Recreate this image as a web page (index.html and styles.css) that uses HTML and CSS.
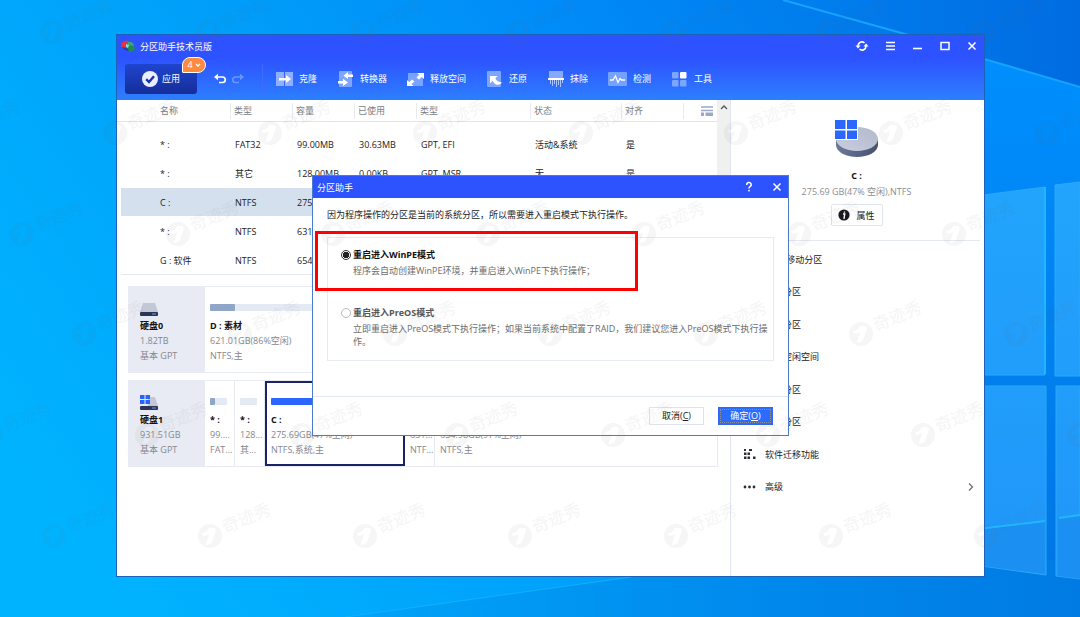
FILE: index.html
```html
<!DOCTYPE html>
<html lang="zh-CN">
<head>
<meta charset="utf-8">
<title>分区助手技术员版</title>
<link rel="stylesheet" href="styles.css">
</head>
<body>
<div class="desktop">
  <svg class="wallpaper" viewBox="0 0 1080 617" preserveAspectRatio="none" aria-hidden="true">
    <defs>
      <linearGradient id="sky" x1="0" y1="0.7" x2="1" y2="0.3">
        <stop offset="0" stop-color="#00b3ff"/><stop offset="0.35" stop-color="#00a2fa"/>
        <stop offset="0.7" stop-color="#008af8"/><stop offset="1" stop-color="#0074e6"/>
      </linearGradient>
      <linearGradient id="corner" x1="0" y1="0" x2="1" y2="0">
        <stop offset="0" stop-color="#0080f0"/><stop offset="1" stop-color="#006ce2"/>
      </linearGradient>
      <linearGradient id="floor" x1="0" y1="0" x2="1" y2="0">
        <stop offset="0" stop-color="#00a4f8"/><stop offset="0.6" stop-color="#0088ec"/><stop offset="1" stop-color="#007be4"/>
      </linearGradient>
      <linearGradient id="beam" x1="0" y1="0" x2="0" y2="1">
        <stop offset="0" stop-color="#0090ff"/><stop offset="1" stop-color="#0074e2"/>
      </linearGradient>
      <linearGradient id="pane" x1="0" y1="0" x2="0" y2="1">
        <stop offset="0" stop-color="#22a4fc"/><stop offset="1" stop-color="#2096fa"/>
      </linearGradient>
    </defs>
    <rect width="1080" height="617" fill="url(#sky)"/>
    <path d="M783 0H1080V87L984 59L905 34Z" fill="url(#corner)"/>
    <path d="M905 34L984 59L1080 87V617H905Z" fill="url(#beam)"/>
    <path d="M345 617L631 577L984 560H1080V617Z" fill="url(#floor)"/>
    <path d="M783 0L905 34L984 59L1080 87" fill="none" stroke="#16a2ff" stroke-width="2"/>
    <path d="M345 617L631 577" fill="none" stroke="#10b0ff" stroke-width="1"/>
    <path d="M960 198L1045 187V375H960ZM1055 185L1080 182V376H1055ZM960 386H1046V575L960 563ZM1056 386H1080V579L1056 576Z" fill="url(#pane)" stroke="#2aa9fa"/>
    <path d="M960 531L1045 521V574L960 563ZM1058 518L1080 515V579L1058 576Z" fill="#1c90f2"/>
    <path d="M960 531L1045 521M1059 518L1080 515M1045 187V374" fill="none" stroke="#1fb8ff" stroke-width="2"/>
  </svg>

  <main class="window">
    <header class="top">
      <div class="titlebar">
        <svg class="logo" viewBox="0 0 14 12" aria-hidden="true">
          <path d="M0 6C0 1 4 0 8 1L6 5L5 8Q2 9 0 6Z" fill="#e5333a"/>
          <path d="M7 2Q11 1 13 5L12 7L7 6Z" fill="#3aa66a"/>
          <path d="M6 6Q14 4 14 9Q12 12 9 12Q6 11 6 6Z" fill="#238b52"/>
          <path d="M1 7L6 8L8 11Q3 11 1 7Z" fill="#2a3fae"/>
          <path d="M5 4L8 5L7 8L5 7Z" fill="#8ed5f5"/>
        </svg>
        <h1 class="title">分区助手技术员版</h1>
        <div class="controls">
          <button class="ctl" aria-label="刷新"><svg viewBox="0 0 14 14"><path d="M3 7A4 4 0 0 1 9.500 3.800M11 7A4 4 0 0 1 4.500 10.200" fill="none" stroke="#fff" stroke-width="1.600"/><path d="M0.500 6.500H5.500L3 9.500ZM8.500 7.500H13.500L11 4.500Z" fill="#fff"/></svg></button>
          <button class="ctl" aria-label="菜单"><svg viewBox="0 0 14 14"><path d="M3 3.500H12M3 7H12M3 10.500H12" stroke="#fff" stroke-width="1.300"/></svg></button>
          <button class="ctl" aria-label="最小化"><svg viewBox="0 0 14 14"><path d="M3 9.500H12" stroke="#fff" stroke-width="1.600"/></svg></button>
          <button class="ctl" aria-label="最大化"><svg viewBox="0 0 14 14"><rect x="3" y="3.500" width="8" height="7" fill="none" stroke="#fff" stroke-width="1.500"/></svg></button>
          <button class="ctl" aria-label="关闭"><svg viewBox="0 0 14 14"><path d="M3.500 3.500L10.500 10.500M10.500 3.500L3.500 10.500" stroke="#fff" stroke-width="1.500"/></svg></button>
        </div>
      </div>
      <nav class="toolbar">
        <div class="apply-wrap">
          <button class="apply">
            <svg class="check" viewBox="0 0 16 16" aria-hidden="true"><circle cx="8" cy="8" r="8" fill="#e9efff"/><path d="M4.200 8.200L7 11L12 5.200" fill="none" stroke="#1a34a8" stroke-width="2.400"/></svg>
            <span>应用</span>
          </button>
          <button class="badge"><span>4</span><svg viewBox="0 0 6 6" aria-hidden="true"><path d="M1 2L3 4L5 2" fill="none" stroke="#fff" stroke-width="1.300"/></svg></button>
        </div>
        <div class="history">
          <button class="ctl" aria-label="撤销"><svg viewBox="0 0 14 14"><path d="M4 5H9.500A2.500 2.500 0 0 1 9.500 10.500H6" fill="none" stroke="#fff" stroke-width="1.700"/><path d="M1 5L5 1.800V8.200Z" fill="#fff"/></svg></button>
          <button class="ctl faded" aria-label="重做"><svg viewBox="0 0 14 14"><path d="M10 5H4.500A2.500 2.500 0 0 0 4.500 10.500H8" fill="none" stroke="#fff" stroke-width="1.500"/><path d="M13 5L9 1.800V8.200Z" fill="#fff"/></svg></button>
        </div>
        <div class="tools">
          <button class="tool"><svg viewBox="0 0 18 16"><path d="M0 1H8V15H0ZM9 1H17V15H9Z" fill="#8fb0ff"/><path d="M3 7H10V4L15 8L10 12V9.500H3Z" fill="#fff"/></svg><span>克隆</span></button>
          <button class="tool"><svg viewBox="0 0 18 16"><rect x="2" width="13" height="16" rx="1" fill="#7ea6ff"/><path d="M16 3.500H11V1L6.500 4.800L11 8V6H16ZM1 10H6V7.800L11 11.500L6 15V12.500H1Z" fill="#fff"/></svg><span>转换器</span></button>
          <button class="tool"><svg viewBox="0 0 18 16"><rect x="1" y="2" width="15" height="13" fill="#78a3ff"/><path d="M10 2H17V8L14.800 6L12 8.500L9.500 6.500L12.200 3.800ZM0 9L2.200 11L5 8.500L7.500 10.500L4.500 13L6.500 15H0Z" fill="#fff"/></svg><span>释放空间</span></button>
          <button class="tool"><svg viewBox="0 0 18 16"><rect x="1" width="14" height="16" rx="1" fill="#7ba5ff"/><path d="M4 5H11.500L9.300 7.300Q11 11 16 11.500Q14 14.500 10 13.500Q7.500 12.500 6.600 9.800L4 12.500Z" fill="#fff"/></svg><span>还原</span></button>
          <button class="tool"><svg viewBox="0 0 18 16"><path d="M2 0H16V7H2Z" fill="#85aaff"/><path d="M1 7H17V9H1Z" fill="#fff"/><path d="M3.500 9V13M5.500 9V15M7.500 9V13M9.500 9V16M11.500 9V14M13.500 9V16M15.500 9V12" stroke="#a9c5ff" stroke-width="1"/></svg><span>抹除</span></button>
          <button class="tool wide"><svg viewBox="0 0 20 16"><rect x="0" y="1" width="19" height="14" rx="1" fill="#75a1ff"/><path d="M2 9H5L7.500 5L10 11.500L12 7.500L13.500 9H17" fill="none" stroke="#fff" stroke-width="1.300"/></svg><span>检测</span></button>
          <button class="tool"><svg viewBox="0 0 18 16"><rect x="1" y="1" width="6.500" height="6.500" rx="1" fill="#7da6ff"/><rect x="9" y="1" width="6.500" height="6.500" rx="1" fill="#fff"/><rect x="1" y="9" width="6.500" height="6.500" rx="1" fill="#7da6ff"/><rect x="9" y="9" width="6.500" height="6.500" rx="1" fill="#7da6ff"/></svg><span>工具</span></button>
        </div>
      </nav>
    </header>

    <div class="content">
      <section class="left">
        <div class="listing">
          <table class="parts">
            <colgroup><col class="c-name"><col class="c-s"><col class="c-s"><col class="c-s"><col class="c-type"><col class="c-state"><col class="c-s"><col></colgroup>
            <thead>
              <tr><th>名称</th><th>类型</th><th>容量</th><th>已使用</th><th>类型</th><th>状态</th><th>对齐</th>
                <th class="view"><svg viewBox="0 0 12 10" aria-hidden="true"><path d="M0 1H12M0 4.500H12" stroke="#9ba9c6" stroke-width="1.500"/><path d="M0 6.500H3V10H0ZM4.500 6.500H12V10H4.500Z" fill="#9ba9c6"/></svg></th></tr>
            </thead>
            <tbody>
              <tr class="spacer"><td colspan="8"></td></tr>
              <tr><td>* :</td><td>FAT32</td><td>99.00MB</td><td>30.63MB</td><td>GPT, EFI</td><td>活动&amp;系统</td><td>是</td><td></td></tr>
              <tr><td>* :</td><td>其它</td><td>128.00MB</td><td>0.00KB</td><td>GPT, MSR</td><td>无</td><td>是</td><td></td></tr>
              <tr class="selected"><td>C :</td><td>NTFS</td><td>275.69GB</td><td>144.99GB</td><td>GPT</td><td>启动</td><td>是</td><td></td></tr>
              <tr><td>* :</td><td>NTFS</td><td>631.00MB</td><td>540.00MB</td><td>GPT</td><td>无</td><td>是</td><td></td></tr>
              <tr><td>G : 软件</td><td>NTFS</td><td>654.98GB</td><td>19.41GB</td><td>GPT</td><td>无</td><td>是</td><td></td></tr>
            </tbody>
          </table>
          <div class="scroll"><svg viewBox="0 0 8 6" aria-hidden="true"><path d="M1 5L4 2L7 5" fill="none" stroke="#555" stroke-width="1.300"/></svg></div>
        </div>

        <div class="map">
          <article class="disk">
            <div class="disk-info">
              <div class="disk-pic"><svg viewBox="0 0 18 16" aria-hidden="true"><path d="M3 3H15L18 12H0Z" fill="#c3c8d6"/><rect y="12" width="18" height="4" rx="1" fill="#2c3555"/><path d="M12 14H16" stroke="#6f9cff"/></svg></div>
              <strong>硬盘0</strong><span>1.82TB</span><span>基本 GPT</span>
            </div>
            <div class="part grow">
              <div class="bar"><div class="fill" style="width: 5%"></div></div>
              <strong>D : 素材</strong><span>621.01GB(86%空闲)</span><span>NTFS,主</span>
            </div>
          </article>
          <article class="disk">
            <div class="disk-info">
              <div class="disk-pic"><svg viewBox="0 0 18 16" aria-hidden="true"><path d="M8 3H15L18 12H8Z" fill="#c3c8d6"/><rect y="12" width="18" height="4" rx="1" fill="#2c3555"/><path d="M12 14H16" stroke="#6f9cff"/><path d="M0 1H4.500V5H0ZM5.500 1H10V5H5.500ZM0 6H4.500V10H0ZM5.500 6H10V10H5.500Z" fill="#2a62ff"/></svg></div>
              <strong>硬盘1</strong><span>931.51GB</span><span>基本 GPT</span>
            </div>
            <div class="part small">
              <div class="bar"><div class="fill" style="width: 29%"></div></div>
              <strong>* :</strong><span>99....</span><span>FAT...</span>
            </div>
            <div class="part small">
              <div class="bar"></div>
              <strong>* :</strong><span>128...</span><span>其...</span>
            </div>
            <div class="part medium active">
              <div class="bar"><div class="fill" style="width: 53%"></div></div>
              <strong>C :</strong><span>275.69GB(47%空闲)</span><span>NTFS,系统,主</span>
            </div>
            <div class="part small">
              <div class="bar"></div>
              <strong>* :</strong><span>631...</span><span>NTF...</span>
            </div>
            <div class="part grow">
              <div class="bar"></div>
              <strong>G : 软件</strong><span>654.98GB(97%空闲)</span><span>NTFS,主</span>
            </div>
          </article>
        </div>
      </section>

      <aside class="side">
        <div class="summary">
          <svg class="drive" viewBox="0 0 44 40" aria-hidden="true">
            <defs>
              <linearGradient id="plate" x1="0" y1="1" x2="1" y2="0"><stop offset="0" stop-color="#c9cede"/><stop offset="1" stop-color="#b2b9cc"/></linearGradient>
              <linearGradient id="rim" x1="0" y1="0" x2="1" y2="0"><stop offset="0" stop-color="#6c7a99"/><stop offset="1" stop-color="#46506f"/></linearGradient>
            </defs>
            <path d="M1 20V26A21 12 0 0 0 43 26V20Z" fill="url(#rim)"/>
            <ellipse cx="22" cy="20" rx="21" ry="12" fill="url(#plate)"/>
            <path d="M0 0H23V21H0Z" fill="#fff"/>
            <path d="M0 1H10.500V10H0ZM12 1H22V10H12ZM0 11.500H10.500V20H0ZM12 11.500H22V20H12Z" fill="#2a66ff"/>
          </svg>
          <strong class="name">C :</strong>
          <span class="size">275.69 GB(47% 空闲),NTFS</span>
          <button class="props"><svg viewBox="0 0 12 12" aria-hidden="true"><circle cx="6" cy="6" r="5.600" fill="#16181d"/><path d="M5 5H6.800L6 9H7M6.500 2.500L6.400 3.800" fill="none" stroke="#fff" stroke-width="1.300"/></svg><span>属性</span></button>
        </div>
        <div class="menu">
          <button class="item"><svg viewBox="0 0 13 10"><path d="M0 5H12M3 2L0 5L3 8M9 2L12 5L9 8" fill="none" stroke="#333"/></svg><span>调整/移动分区</span></button>
          <button class="item"><svg viewBox="0 0 13 10"><path d="M1 1H6V9H1ZM7 1H12V9H7Z" fill="#333"/></svg><span>合并分区</span></button>
          <button class="item"><svg viewBox="0 0 13 10"><path d="M1 1H6V9H1ZM7 1H12V9H7Z" fill="#333"/></svg><span>切割分区</span></button>
          <button class="item"><svg viewBox="0 0 13 10"><path d="M1 1H12V9H1Z" fill="none" stroke="#333"/></svg><span>分配空闲空间</span></button>
          <button class="item"><svg viewBox="0 0 13 10"><path d="M1 1H9V7H1Z" fill="none" stroke="#333"/></svg><span>克隆分区</span></button>
          <button class="item"><svg viewBox="0 0 13 10"><path d="M3 1L10 9M10 1L3 9" fill="none" stroke="#333"/></svg><span>删除分区</span></button>
          <button class="item"><svg viewBox="0 0 13 10"><path d="M1 0H3V2H1ZM6 0H9V2H6ZM1 3.500H3.500V6H1ZM4.500 3.500H7V6H4.500ZM1 7.500H3.500V10H1ZM4.500 7.500H7V10H4.500ZM10 7.500H12.500V10H10Z" fill="#2d2f36"/></svg><span>软件迁移功能</span></button>
          <button class="item"><svg viewBox="0 0 13 10"><circle cx="2" cy="5" r="1.400" fill="#2d2f36"/><circle cx="6.500" cy="5" r="1.400" fill="#2d2f36"/><circle cx="11" cy="5" r="1.400" fill="#2d2f36"/></svg><span>高级</span><svg class="more" viewBox="0 0 6 10" aria-hidden="true"><path d="M1 1.500L4.500 5L1 8.500" fill="none" stroke="#6c7078" stroke-width="1.300"/></svg></button>
        </div>
      </aside>
    </div>

    <form class="dialog" role="dialog" aria-labelledby="dlg-title">
      <div class="dlg-bar">
        <h2 class="title" id="dlg-title">分区助手</h2>
        <div class="dlg-controls">
          <button type="button" class="ctl" aria-label="帮助"><svg viewBox="0 0 14 14"><path d="M4.800 5A2.200 2.200 0 1 1 8 6.600Q7 7.200 7 8.500" fill="none" stroke="#fff" stroke-width="1.500"/><rect x="6.200" y="9.800" width="1.600" height="1.600" fill="#fff"/></svg></button>
          <button type="button" class="ctl" aria-label="关闭"><svg viewBox="0 0 14 14"><path d="M3.500 3.500L10.500 10.500M10.500 3.500L3.500 10.500" stroke="#fff" stroke-width="1.500"/></svg></button>
        </div>
      </div>
      <div class="dlg-body">
        <p class="lead">因为程序操作的分区是当前的系统分区，所以需要进入重启模式下执行操作。</p>
        <fieldset class="modes">
          <div class="option">
            <input type="radio" name="mode" id="winpe" checked aria-describedby="winpe-text">
            <label for="winpe">重启进入WinPE模式</label>
            <p id="winpe-text">程序会自动创建WinPE环境，并重启进入WinPE下执行操作；</p>
          </div>
          <div class="option muted">
            <input type="radio" name="mode" id="preos" aria-describedby="preos-text">
            <label for="preos">重启进入PreOS模式</label>
            <p id="preos-text">立即重启进入PreOS模式下执行操作；如果当前系统中配置了RAID，我们建议您进入PreOS模式下执行操作。</p>
          </div>
          <div class="highlight"></div>
        </fieldset>
      </div>
      <div class="dlg-foot">
        <button type="button" class="btn">取消(<u>C</u>)</button>
        <button type="button" class="btn primary">确定(<u>O</u>)</button>
      </div>
    </form>
  </main>

  <svg class="watermark" aria-hidden="true">
    <defs>
      <g id="mark">
        <path fill-rule="evenodd" d="M0 -12A12 12 0 1 1 0 12A12 12 0 1 1 0 -12ZM-8 -3Q-3 -3 -1 -8Q3 -9 6 -7Q6 -4 4 0L2 6Q1 8 -4 9Q-4 6 -2 2L-1 -2Q-4 0 -7 0Z"/>
        <text x="15" y="3" transform="rotate(-22)" font-size="17">奇迹秀</text>
      </g>
      <g id="row">
        <use href="#mark" x="-466"/><use href="#mark" x="-311"/><use href="#mark" x="-155"/><use href="#mark" x="0"/>
        <use href="#mark" x="155"/><use href="#mark" x="311"/><use href="#mark" x="466"/><use href="#mark" x="621"/><use href="#mark" x="777"/>
      </g>
    </defs>
    <use href="#row" x="363" y="32"/>
    <use href="#row" x="270" y="133"/>
    <use href="#row" x="333" y="234"/>
    <use href="#row" x="395" y="334"/>
    <use href="#row" x="302" y="435"/>
    <use href="#row" x="365" y="536"/>
  </svg>
</div>
</body>
</html>
```
FILE: styles.css
```css
* { box-sizing: border-box; }

body {
  margin: 0;
  font-family: "Open Sans", "Noto Sans CJK SC", sans-serif;
  font-size: 9px;
  line-height: 15px;
  color: #222;
}

button {
  margin: 0;
  padding: 0;
  border: 0;
  background: none;
  font: inherit;
  color: inherit;
}

svg { display: block; }

.desktop {
  position: relative;
  height: 100vh;
  overflow: hidden;
}

.wallpaper,
.watermark {
  position: absolute;
  inset: 0;
  width: 100%;
  height: 100%;
}

.watermark {
  pointer-events: none;
  fill: #666;
  opacity: 0.06;
  font-weight: 500;
}

/* Main window */
.window {
  position: absolute;
  inset: 34px 95px 40px 116px;
  display: flex;
  flex-direction: column;
  border: 1px solid #1b62b8;
  background: #fff;
}

.top {
  background: linear-gradient(#2d52ff 35%, #2d7fff);
  color: #fff;
}

.titlebar {
  display: flex;
  align-items: center;
  height: 22px;
  padding: 0 5px 0 4px;
}

.logo {
  width: 14px;
  height: 12px;
  margin-right: 5px;
}

.title {
  margin: 0;
  font-size: 9px;
  font-weight: 400;
}

.controls {
  display: flex;
  justify-content: space-between;
  width: 124px;
  margin-left: auto;
}

.ctl,
.ctl svg {
  width: 14px;
  height: 14px;
}

.faded { opacity: 0.3; }

.toolbar {
  display: flex;
  align-items: center;
  height: 43px;
  padding: 0 8px;
}

.apply-wrap { position: relative; }

.apply {
  display: flex;
  align-items: center;
  justify-content: center;
  gap: 4px;
  width: 72px;
  height: 30px;
  border-radius: 3px;
  background: linear-gradient(#1f45cf, #152d98);
}

.check {
  width: 16px;
  height: 16px;
}

.badge {
  position: absolute;
  top: -7px;
  right: -9px;
  display: flex;
  align-items: center;
  justify-content: center;
  gap: 2px;
  width: 24px;
  height: 16px;
  border: 1px solid #fff;
  border-radius: 8px 8px 8px 1px;
  background: #ff8a40;
}

.badge svg {
  width: 6px;
  height: 6px;
}

.history {
  display: flex;
  align-items: center;
  gap: 4px;
  height: 30px;
  margin-left: 16px;
  padding-right: 17px;
  border-right: 1px solid #3f6cff;
}

.tools {
  display: flex;
  gap: 20px;
  margin-left: 13px;
}

.tool {
  display: flex;
  align-items: center;
  gap: 5px;
}

.tool svg {
  width: 18px;
  height: 16px;
}

.wide svg { width: 20px; }

.content {
  display: flex;
  flex: 1;
  min-height: 0;
}

.left {
  flex: 1;
  min-width: 0;
}

/* Partition list */
.listing {
  display: flex;
  height: 175px;
  border-bottom: 1px solid #e3e8f3;
}

.parts {
  flex: 1;
  table-layout: fixed;
  width: 100%;
  height: 1px;
  border-spacing: 0;
}

.c-name { width: 113px; }
.c-s { width: 62px; }
.c-type { width: 114px; }
.c-state { width: 91px; }

.parts th {
  height: 22px;
  padding: 0 0 0 4px;
  border-bottom: 1px solid #dfe5f1;
  background: linear-gradient(#e6eaf3, #e6eaf3) left center / 1px 16px no-repeat;
  color: #7b7e85;
  font-weight: 400;
  text-align: left;
}

.parts th:first-child {
  padding-left: 43px;
  background: none;
}

.view svg {
  width: 12px;
  height: 10px;
  margin-left: 14px;
}

.parts td {
  height: 29px;
  padding: 0 0 0 5px;
  white-space: nowrap;
}

.parts td:first-child {
  padding-left: 39px;
  border-left: 4px solid #fff;
}

.parts .spacer td { height: 8px; }

.selected td {
  border-bottom: 1px solid #fff;
  background: #d5e0ef;
}

.scroll {
  width: 13px;
  padding: 4px 3px;
  background: #f0f0f1;
}

.scroll svg {
  width: 8px;
  height: 6px;
}

/* Disk map */
.map {
  display: flex;
  flex-direction: column;
  gap: 7px;
  padding: 11px 12px 0 11px;
}

.disk {
  display: flex;
  height: 87px;
  border: 1px solid #e8ebf3;
}

.disk-info,
.part {
  display: flex;
  flex-direction: column;
  color: #85888e;
}

.disk-info {
  width: 76px;
  padding-left: 11px;
  background: #e8ebf3;
}

.disk-pic {
  height: 31px;
  padding-top: 13px;
}

.disk-pic svg {
  width: 18px;
  height: 16px;
}

.disk strong {
  color: #111;
  font-weight: 700;
}

.part {
  padding: 17px 6px 0 5px;
  border-right: 1px solid #e8ebf3;
}

.part:last-child { border-right: 0; }

.part span { white-space: nowrap; }

.small {
  width: 30px;
  padding-right: 0;
}

.small .bar { width: 17px; }

.medium { width: 140px; }

.grow {
  flex: 1;
  min-width: 0;
}

.part.active {
  padding: 15px 4px 0;
  border: 2px solid #1b2266;
}

.bar {
  height: 7px;
  margin-bottom: 7px;
  border-radius: 1px;
  background: #e3eaf4;
}

.fill {
  height: 100%;
  border-radius: 1px;
  background: #8fa6c8;
}

.active .fill { background: #2a66ff; }

/* Side panel */
.side {
  width: 254px;
  border-left: 1px solid #e0e5f1;
}

.summary {
  display: flex;
  flex-direction: column;
  align-items: center;
  height: 141px;
  margin-right: 4px;
  padding: 19px 0 0 2px;
  border-bottom: 1px solid #e3e8f3;
}

.drive {
  width: 44px;
  height: 40px;
  margin-bottom: 9px;
}

.name {
  margin-bottom: 1px;
  color: #111;
}

.size {
  margin-bottom: 5px;
  color: #8b8e94;
}

.props {
  display: flex;
  align-items: center;
  justify-content: center;
  gap: 6px;
  width: 52px;
  height: 22px;
  border: 1px solid #dfe5f1;
  border-radius: 2px;
}

.props svg {
  width: 12px;
  height: 12px;
}

.menu {
  display: grid;
  grid-auto-rows: 1fr;
  height: 260px;
  margin-top: 2px;
}

.item {
  display: flex;
  align-items: center;
  gap: 9px;
  padding: 0 10px 0 12px;
}

.item svg {
  width: 13px;
  height: 10px;
}

.item .more {
  width: 6px;
  margin-left: auto;
}

/* Restart dialog */
.dialog {
  position: absolute;
  inset: 0;
  width: 477px;
  height: fit-content;
  margin: auto;
  border: 1px solid #4b7bd0;
  background: #fff;
}

.dlg-bar {
  display: flex;
  align-items: center;
  justify-content: space-between;
  height: 22px;
  padding: 0 4px;
  background: #2d52ff;
  color: #fff;
}

.dlg-controls {
  display: flex;
  gap: 14px;
}

.dlg-body {
  height: 198px;
  padding: 9px 14px 0;
}

.lead { margin: 0 0 15px; }

.modes {
  position: relative;
  min-width: 0;
  height: 124px;
  margin: 0;
  padding: 9px 2px 0 13px;
  border: 1px solid #e6ebf4;
}

.option {
  display: grid;
  grid-template-columns: 10px 1fr;
  column-gap: 2px;
  align-items: center;
  min-height: 58px;
  align-content: start;
}

.option input {
  appearance: none;
  width: 10px;
  height: 10px;
  margin: 0;
  border: 1px solid #bbb;
  border-radius: 50%;
}

.option input:checked {
  border-color: #333;
  background: radial-gradient(#222 0 3px, #fff 3px);
}

.option label {
  color: #111;
  font-weight: 700;
}

.option p {
  grid-column: 2;
  margin: 2px 0 0;
  line-height: 13px;
  color: #6c6c6c;
}

.muted label { color: #555; }

.highlight {
  position: absolute;
  top: -7px;
  left: -13px;
  width: 323px;
  height: 60px;
  border: 3px solid #f00;
}

.dlg-foot {
  display: flex;
  align-items: center;
  justify-content: flex-end;
  gap: 14px;
  height: 39px;
  padding-right: 15px;
  border-top: 1px solid #e3e8f3;
}

.btn {
  width: 55px;
  height: 18px;
  border: 1px solid #dde3ef;
  background: #fff;
  line-height: 14px;
}

.primary {
  border-color: #2a66ff;
  background: #2a6cff;
  color: #fff;
  outline: 1px dotted #8a8fa0;
  outline-offset: -3px;
}
```
